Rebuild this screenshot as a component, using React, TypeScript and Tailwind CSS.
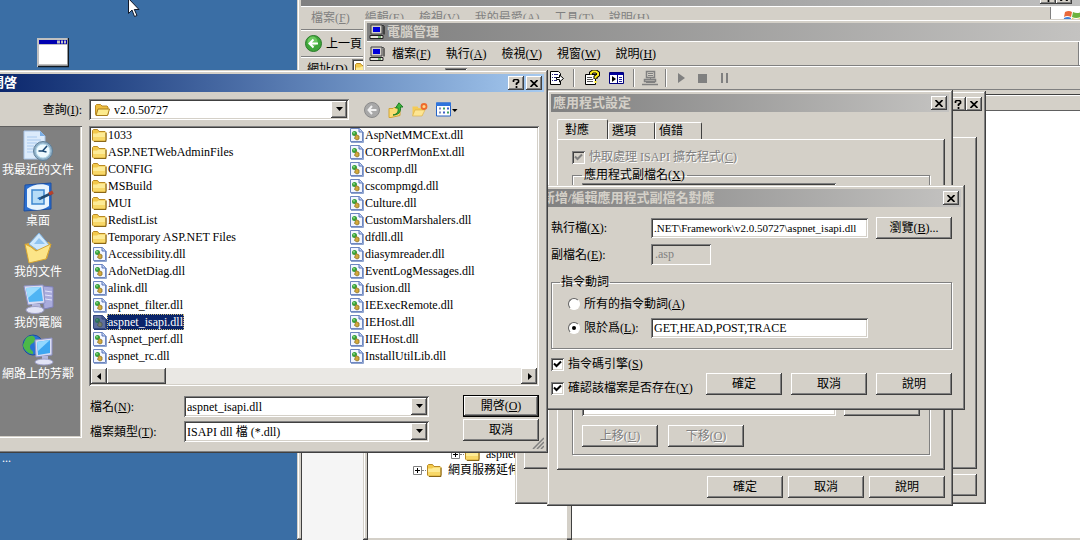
import { useState } from "react";
import type { ReactNode } from "react";

const fontMain = "font-['Liberation_Serif','Noto_Sans_CJK_TC',serif] text-[12px] leading-4 text-black";

const raisedWindow = "bg-[#d4d0c8] shadow-[inset_-1px_-1px_#404040,inset_1px_1px_#d4d0c8,inset_-2px_-2px_#808080,inset_2px_2px_#ffffff]";
const raised = "bg-[#d4d0c8] shadow-[inset_-1px_-1px_#404040,inset_1px_1px_#ffffff,inset_-2px_-2px_#808080]";
const sunken = "shadow-[inset_1px_1px_#808080,inset_-1px_-1px_#ffffff,inset_2px_2px_#404040,inset_-2px_-2px_#d4d0c8]";
const disabledText = "text-[#808080] [text-shadow:1px_1px_#ffffff]";

const places = ["我最近的文件", "桌面", "我的文件", "我的電腦", "網路上的芳鄰"];

const folders = ["1033", "ASP.NETWebAdminFiles", "CONFIG", "MSBuild", "MUI", "RedistList", "Temporary ASP.NET Files"];

const leftDlls = [
  "Accessibility.dll",
  "AdoNetDiag.dll",
  "alink.dll",
  "aspnet_filter.dll",
  "aspnet_isapi.dll",
  "Aspnet_perf.dll",
  "aspnet_rc.dll",
];

const rightDlls = [
  "AspNetMMCExt.dll",
  "CORPerfMonExt.dll",
  "cscomp.dll",
  "cscompmgd.dll",
  "Culture.dll",
  "CustomMarshalers.dll",
  "dfdll.dll",
  "diasymreader.dll",
  "EventLogMessages.dll",
  "fusion.dll",
  "IEExecRemote.dll",
  "IEHost.dll",
  "IIEHost.dll",
  "InstallUtilLib.dll",
];

/* ---------- icons ---------- */

function FolderIcon() {
  return (
    <svg width="16" height="16" viewBox="0 0 16 16" className="shrink-0">
      <path d="M1.5 13V3.5l1-1h4l1.5 2h6l1 1V13l-1 1h-11.500z" fill="#f3c94b" stroke="#b98a24" />
      <path d="M2 6.500h4l1.500-1H14.500V13H2z" fill="#fdeb96" />
      <path d="M2 10h12.500v3.500H2z" fill="#f8d868" />
      <path d="M3 14.500h12V6" stroke="#8a6718" fill="none" />
    </svg>
  );
}

function OpenFolderIcon() {
  return (
    <svg width="16" height="16" viewBox="0 0 16 16" className="shrink-0">
      <path d="M1.500 12.500V3.500l1-1h4l1.500 1.500h5l1 1v7.500z" fill="#eebd3e" stroke="#b98a24" />
      <path d="M2 13.500l2-6.500h11.500l-2 6.500z" fill="#fdeb8c" stroke="#a87c1c" />
    </svg>
  );
}

function DllIcon({ selected = false }: { selected?: boolean }) {
  return (
    <svg width="16" height="16" viewBox="0 0 16 16" className="shrink-0">
      <path d="M2.500 1.500h9l3 3v10h-12z" fill={selected ? "#5e6f9e" : "#f2f6ff"} stroke={selected ? "#33477f" : "#6d86c0"} />
      <path d="M11 1.500v3.500h3.500" fill={selected ? "#4b5f92" : "#c3d4f5"} stroke={selected ? "#33477f" : "#5673b8"} />
      <path d="M3 15.500h12.500V5" fill="none" stroke={selected ? "#22376f" : "#8fa4cf"} />
      <circle cx="6.500" cy="6.500" r="2.500" fill={selected ? "#2a7058" : "#35a03a"} />
      <path d="M8 7.500l3 1.500v3l-2 1-2.500-1.500z" fill={selected ? "#77806a" : "#d3a93a"} stroke={selected ? "#4b5652" : "#8d7226"} strokeWidth=".8" />
      <circle cx="6" cy="5.800" r=".9" fill={selected ? "#598f7c" : "#9be08e"} />
    </svg>
  );
}

function PcIcon() {
  return (
    <svg width="16" height="16" viewBox="0 0 16 16" className="shrink-0">
      <path d="M2 1h11v9H2z" fill="#d4d0c8" stroke="#404040" />
      <path d="M4 3h7v5H4z" fill="#0000d8" />
      <path d="M13.500 1l1.500 1.500v8" stroke="#000" fill="none" />
      <path d="M1 11.500h13v3H1z" fill="#e8e5de" stroke="#202020" />
      <path d="M9 13h3" stroke="#008000" />
    </svg>
  );
}

function Arrow({ dir }: { dir: "down" | "left" | "right" }) {
  const shape = { down: "M1 2h7L4.500 6z", left: "M6 1v7L2 4.500z", right: "M3 1v7l4-3.500z" };
  return (
    <svg width="9" height="9" viewBox="0 0 9 9">
      <path d={shape[dir]} fill="#000" />
    </svg>
  );
}

function PlaceIcon({ index }: { index: number }) {
  return (
    <svg width="32" height="32" viewBox="0 0 32 32">
      {index === 0 && (
        <>
          <path d="M2 1h16l5 5v23H2z" fill="#dcebfb" stroke="#a8c4e6" />
          <path d="M18 1v5h5" fill="#7aaee6" />
          <path d="M5 7h10M5 10h14M5 13h10M5 16h7M5 19h6M5 22h6" stroke="#a9c9ee" />
          <circle cx="21" cy="21" r="9.500" fill="#8fb0c8" stroke="#5f7f98" />
          <circle cx="21" cy="21" r="7" fill="#eefaff" stroke="#b9dced" />
          <path d="M25 16l-4.500 5H16.500M20.500 21l4 1" stroke="#1e4a74" strokeWidth="1.600" fill="none" />
        </>
      )}
      {index === 1 && (
        <>
          <path d="M3 4l26-2v26L2 30z" fill="#2b6fd0" stroke="#1c4fa2" />
          <path d="M5 8c6-5 16-6 22-3v20c-7 5-16 5-22 1z" fill="#e8f4fd" />
          <path d="M10 9h12v14H10z" fill="#b6dcf7" stroke="#3e86cf" strokeWidth="1.500" />
          <path d="M17 18l13-6" stroke="#214a70" strokeWidth="2.500" />
          <path d="M27 13l4-2" stroke="#b5402a" strokeWidth="3.500" />
          <path d="M15 17l4-1-1 3z" fill="#1b6ac0" />
        </>
      )}
      {index === 2 && (
        <>
          <path d="M3 12l4-1 20-1 2 3-4 14-18 3z" fill="#dda93a" />
          <path d="M7 12L17 1l11 13-6 9z" fill="#cfe8fc" stroke="#7fb2e0" />
          <path d="M12 12l5-6 6 6z" fill="#8fc4f1" />
          <path d="M3 12l6 3 5 4 15-7-5 15-17 4z" fill="#fce588" stroke="#d6a532" />
        </>
      )}
      {index === 3 && (
        <>
          <path d="M20 3l11 1v20l-9 2z" fill="#a9abdc" stroke="#7e80b8" />
          <path d="M23 8l7 1M23 12l7 1M23 16l7 1" stroke="#e3e4fb" />
          <path d="M2 3l19-1 2 18-17 2z" fill="#d9dcf3" stroke="#8c90c4" />
          <path d="M4 5l15-1 2 14-14 1z" fill="#4fb4f4" />
          <path d="M4 5l15-1-13 11z" fill="#9bdcff" />
          <path d="M10 21h8l1 4H10z" fill="#b6b9de" />
          <ellipse cx="13" cy="27" rx="9" ry="3.500" fill="#e2e4f6" stroke="#9ea1cb" />
        </>
      )}
      {index === 4 && (
        <>
          <circle cx="11" cy="11" r="10" fill="#2872d4" stroke="#1b4fa0" />
          <path d="M4 4c5-4 10-2 9 2s-5 3-5 7 4 3 3 7c-5 0-10-5-10-9z" fill="#4cb848" />
          <path d="M13 6l17-2v17l-16 2z" fill="#d9dcf3" stroke="#8c90c4" />
          <path d="M15 8l13-2v13l-12 2z" fill="#3ea6f0" />
          <path d="M15 8l13-2-12 11z" fill="#93d8ff" />
          <path d="M20 22h6v4h-6z" fill="#b6b9de" />
          <ellipse cx="22" cy="28" rx="9" ry="3" fill="#e2e4f6" stroke="#9ea1cb" />
        </>
      )}
    </svg>
  );
}

/* ---------- controls ---------- */

function Key({ text, k, tail = "" }: { text: string; k: string; tail?: string }) {
  return (
    <>
      {text}(<u>{k}</u>){tail}
    </>
  );
}

function PushButton({ children, label, disabled = false, primary = false }: {
  children?: ReactNode;
  label?: string;
  disabled?: boolean;
  primary?: boolean;
}) {
  return (
    <button
      aria-label={label}
      disabled={disabled}
      className={`h-[22px] w-[76px] shrink-0 whitespace-nowrap ${raised} ${disabled ? disabledText : ""} ${primary ? "border border-black" : ""}`}
    >
      {children}
    </button>
  );
}

function CaptionButton({ kind }: { kind: "close" | "help" }) {
  return (
    <button aria-label={kind} className={`flex h-[14px] w-4 items-center justify-center ${raised}`}>
      {kind === "close" ? (
        <svg width="8" height="7" viewBox="0 0 8 7">
          <path d="M.5 0l7 7M7.500 0l-7 7" stroke="#000" strokeWidth="1.700" />
        </svg>
      ) : (
        <svg width="8" height="9" viewBox="0 0 8 9">
          <path d="M1.500 3V1.500l1-1h3l1 1V3L4.500 4.500V6M4.500 7v2" stroke="#000" strokeWidth="1.700" fill="none" />
        </svg>
      )}
    </button>
  );
}

function TitleBar({ title, active = false, help = false, icon, buttons = true }: {
  title?: string;
  active?: boolean;
  help?: boolean;
  icon?: ReactNode;
  buttons?: boolean;
}) {
  return (
    <div
      className={`flex h-[18px] shrink-0 items-center gap-0.5 px-0.5 ${
        active ? "bg-linear-to-r from-[#0a246a] to-[#a6caf0] text-white" : "bg-linear-to-r from-[#808080] to-[#c4c3c1] text-[#d4d0c8]"
      }`}
    >
      {icon}
      <h2 className="flex-1 truncate text-[13px] font-bold">{title}</h2>
      {buttons && help && <CaptionButton kind="help" />}
      {buttons && <CaptionButton kind="close" />}
    </div>
  );
}

function TickBox({ id, label, defaultChecked, disabled = false }: { id: string; label: ReactNode; defaultChecked: boolean; disabled?: boolean }) {
  return (
    <div className="flex h-4 items-center gap-1">
      <span className="grid place-items-center">
        <input
          id={id}
          type="checkbox"
          defaultChecked={defaultChecked}
          disabled={disabled}
          className={`peer col-start-1 row-start-1 size-[13px] appearance-none ${sunken} ${disabled ? "bg-[#d4d0c8]" : "bg-white"}`}
        />
        <svg width="9" height="9" viewBox="0 0 9 9" className="pointer-events-none invisible col-start-1 row-start-1 peer-checked:visible">
          <path d="M1 3.500l2.500 2.500L8 1.500" stroke={disabled ? "#808080" : "#000"} strokeWidth="2" fill="none" />
        </svg>
      </span>
      <label htmlFor={id} className={disabled ? disabledText : ""}>{label}</label>
    </div>
  );
}

function RadioDot({ id, label, checked, onChange }: { id: string; label: ReactNode; checked: boolean; onChange: () => void }) {
  return (
    <div className="flex h-5 items-center gap-1">
      <span className="grid place-items-center">
        <input
          id={id}
          type="radio"
          name="verbs"
          checked={checked}
          onChange={onChange}
          className="peer col-start-1 row-start-1 size-3 appearance-none rounded-full border border-t-[#606060] border-r-white border-b-white border-l-[#606060] bg-white"
        />
        <span className="pointer-events-none invisible col-start-1 row-start-1 size-1 rounded-full bg-black peer-checked:visible" />
      </span>
      <label htmlFor={id}>{label}</label>
    </div>
  );
}

function DropButton({ label }: { label: string }) {
  return (
    <button aria-label={label} tabIndex={-1} className={`flex w-4 shrink-0 items-center justify-center self-stretch ${raised}`}>
      <Arrow dir="down" />
    </button>
  );
}

/* ---------- windows ---------- */

function ExplorerWindow() {
  const menu = [["檔案", "F"], ["編輯", "E"], ["檢視", "V"], ["我的最愛", "A"], ["工具", "T"], ["說明", "H"]];
  return (
    <section className={`absolute -top-4 -right-1 bottom-0 left-[297px] flex flex-col pt-1 pl-1 ${raisedWindow}`}>
      <div className="flex h-[18px] shrink-0 items-center justify-end bg-linear-to-r from-[#808080] to-[#c0c0c0] pr-3">
        <CaptionButton kind="help" />
        <CaptionButton kind="close" />
      </div>
      <div className="flex h-6 shrink-0 items-stretch border-t border-b border-t-white border-b-[#808080]">
        <nav className="flex flex-1 items-center gap-[15px] pl-2.5 text-[#808080]">
          {menu.map(([text, k]) => (
            <button key={text} className="whitespace-nowrap"><Key text={text} k={k} /></button>
          ))}
        </nav>
        <div className="flex w-[34px] items-center border-l border-[#808080] bg-white pl-3">
          <svg width="18" height="16" viewBox="0 0 18 16" className="shrink-0">
            <path d="M2 2q4-2 7 0L8 7Q4 5 1 7z" fill="#e8693a" />
            <path d="M10 2q4 2 8 0v5q-5 2-9 0z" fill="#6db33f" />
            <path d="M1 8q4-2 7 0l-1 5q-3-2-7 0z" fill="#3f7fd6" />
            <path d="M9 8q4 2 9 0v5q-6 2-10 0z" fill="#f0c33c" />
          </svg>
        </div>
      </div>
      <div className="flex h-[27px] shrink-0 items-center gap-1 border-t border-b border-t-white border-b-[#808080] pl-1">
        <svg width="17" height="17" viewBox="0 0 17 17">
          <circle cx="8.500" cy="8.500" r="8" fill="#3fa53a" stroke="#2b7a2b" />
          <circle cx="7.500" cy="6.500" r="5" fill="#6cc95f" />
          <path d="M13 8.500H5M8.500 4.500l-4 4 4 4" stroke="#fff" strokeWidth="2" fill="none" />
        </svg>
        <button>上一頁</button>
      </div>
      <div className="flex h-[22px] shrink-0 items-center gap-1 border-t border-white pl-1.5">
        <span className="whitespace-nowrap"><Key text="網址" k="D" /></span>
        <div className={`flex h-5 flex-1 items-center bg-white pl-0.5 ${sunken}`}><FolderIcon /></div>
      </div>
      <div className="flex-1 border-t border-l border-[#404040] bg-[#f5f5f5]" />
    </section>
  );
}

function Separator() {
  return <span className="h-[18px] w-0.5 border-l border-l-[#808080] bg-white" />;
}

function Expander() {
  return (
    <svg width="9" height="9" viewBox="0 0 9 9">
      <path d="M.5.5h8v8h-8z" fill="#fff" stroke="#808080" />
      <path d="M2 4.500h5M4.500 2v5" stroke="#000" />
    </svg>
  );
}

function ManagementWindow() {
  const menu = [["檔案", "F"], ["執行", "A"], ["檢視", "V"], ["視窗", "W"], ["說明", "H"]];
  return (
    <section className={`absolute top-[19px] -right-1 bottom-0 left-[363px] flex flex-col pt-1 pl-1 ${raisedWindow}`}>
      <TitleBar title="電腦管理" icon={<PcIcon />} buttons={false} />
      <div className="flex h-[25px] shrink-0 items-center border-t border-b border-t-white border-b-[#808080] pr-1 pl-0.5">
        <PcIcon />
        <nav className="flex flex-1 items-center gap-[15px] pl-[7px]">
          {menu.map(([text, k]) => (
            <button key={text}><Key text={text} k={k} /></button>
          ))}
        </nav>
        <span className="w-0.5 self-stretch border-l border-l-[#808080] bg-white" />
      </div>
      <div className="flex h-6 shrink-0 items-center gap-[9px] border-t border-b border-t-white border-b-[#808080] pl-[78px]">
        <button aria-label="console tree" className={`mr-[72px] h-5 w-[22px] ${sunken}`} />
        <button aria-label="export list">
          <svg width="16" height="16" viewBox="0 0 16 16">
            <path d="M2.500 1.500h8l2 2v11h-10z" fill="#fff" stroke="#000" />
            <path d="M4 4.500h1M4 7.500h1M4 10.500h1M6 4.500h4M6 7.500h3M6 10.500h3" stroke="#24247c" />
            <path d="M8.500 7.500h3V5l4 3.500-4 3.500V9.500h-3z" fill="#fff" stroke="#000" />
          </svg>
        </button>
        <Separator />
        <button aria-label="help">
          <svg width="16" height="16" viewBox="0 0 16 16">
            <path d="M1.500 4.500h10v10h-10z" fill="#fff" stroke="#000" />
            <path d="M3 7.500h5M3 9.500h6M3 11.500h6" stroke="#555" />
            <path d="M7 4.500V3l2-1.500h3L14 3v2l-2.500 2v2" fill="none" stroke="#000" strokeWidth="4" />
            <path d="M7 4.500V3l2-1.500h3L14 3v2l-2.500 2v1.500M11.500 11v2" fill="none" stroke="#ffee20" strokeWidth="2" />
          </svg>
        </button>
        <button aria-label="action pane">
          <svg width="15" height="14" viewBox="0 0 15 14">
            <path d="M.5 1.500h14v11H.5z" fill="#fff" stroke="#00007b" />
            <path d="M1 2h13v2H1z" fill="#00009c" />
            <path d="M8.500 4v8" stroke="#00007b" />
            <path d="M3 5v6l4-3z" fill="#000" />
            <path d="M10 6.500h3M10 8.500h3M10 10.500h3" stroke="#2424a0" />
          </svg>
        </button>
        <Separator />
        <svg width="16" height="16" viewBox="0 0 16 16" className="-mx-0.5">
          <path d="M4.500 1.500h8v6h-8zM2.500 9.500h11v2h-11zM0 14.500h16" fill="none" stroke="#808080" strokeWidth="1.500" />
          <path d="M6 3.500h5M6 5.500h5M8.500 8v1M4 12.500h9" stroke="#808080" />
        </svg>
        <Separator />
        <svg width="60" height="12" viewBox="0 0 60 12">
          <path d="M2 1v10l7-5z" fill="#808080" />
          <path d="M22 2h9v9h-9z" fill="#808080" />
          <path d="M46 1v10M51 1v10" stroke="#808080" strokeWidth="2" />
        </svg>
      </div>
      <div className="mt-1 flex flex-1 gap-1">
        <div className="flex w-[200px] shrink-0 flex-col overflow-hidden border-t border-l border-[#404040] bg-white pt-[351px]">
          <ul className="flex-1 overflow-hidden whitespace-nowrap">
            <li className="flex h-4 items-center pl-[83px]">
              <Expander />
              <span className="w-1 border-t border-dotted border-[#808080]" />
              <FolderIcon />
              <span className="pl-1.5">aspnet_client</span>
            </li>
            <li className="flex h-4 items-center pl-[45px]">
              <Expander />
              <span className="w-1 border-t border-dotted border-[#808080]" />
              <FolderIcon />
              <span className="pl-1.5">網頁服務延伸</span>
            </li>
          </ul>
          <div className="h-0.5 bg-[#d4d0c8]" />
        </div>
        <div className="flex flex-1 flex-col border-t border-l border-[#404040] bg-white">
          <div className="h-4 border-t border-b border-t-white border-b-[#606060] bg-[#d4d0c8]" />
          <div className="flex-1" />
          <div className="h-0.5 bg-[#d4d0c8]" />
        </div>
      </div>
    </section>
  );
}

function SiteWindow() {
  return (
    <section className={`absolute top-[91px] left-[515px] flex w-[471px] flex-col p-1 ${raisedWindow}`}>
      <div className="flex h-[18px] items-center justify-end">
        <CaptionButton kind="help" />
        <CaptionButton kind="close" />
      </div>
      <div className="px-[5px]">
        <div className="mt-6 h-[332px] shadow-[inset_-1px_-1px_#404040,inset_1px_1px_#ffffff,inset_-2px_-2px_#808080]" />
      </div>
      <div className="flex justify-end px-[5px] pt-[5px] pb-1">
        <PushButton label="help" />
      </div>
    </section>
  );
}

function Tab({ children, active = false }: { children: ReactNode; active?: boolean }) {
  return (
    <button
      role="tab"
      aria-selected={active}
      className={`rounded-t-xs border-t border-r border-l border-t-white border-r-[#404040] border-l-white text-left ${
        active ? "h-5 w-[51px] bg-[#d4d0c8] px-[7px]" : "h-[17px] w-[47px] border-l-[#d4d0c8] pl-[3px]"
      }`}
    >
      {children}
    </button>
  );
}

function SettingsWindow() {
  return (
    <section className={`absolute top-[90px] left-[547px] flex w-[406px] flex-col p-1 ${raisedWindow}`}>
      <TitleBar title="應用程式設定" />
      <div className="pt-[7px] pr-1 pl-1.5">
        <div role="tablist" className="flex items-end">
          <Tab active>對應</Tab>
          <Tab>選項</Tab>
          <Tab>偵錯</Tab>
        </div>
        <div className="h-[331px] px-[15px] pt-2.5 shadow-[inset_-1px_-1px_#404040,inset_1px_1px_#ffffff,inset_-2px_-2px_#808080]">
          <TickBox id="cache" label={<Key text="快取處理 ISAPI 擴充程式" k="C" />} defaultChecked disabled />
          <fieldset className="mt-0.5 border border-[#808080] px-[9px] pb-[7px] shadow-[1px_1px_#ffffff,inset_1px_1px_#ffffff]">
            <legend className="px-0.5"><Key text="應用程式副檔名" k="X" /></legend>
            <div className="flex items-end gap-2">
              <div className={`h-[233px] w-[254px] bg-white ${sunken}`} />
              <PushButton label="edit" />
            </div>
            <div className="flex gap-2.5 pt-[9px]">
              <PushButton disabled><Key text="上移" k="U" /></PushButton>
              <PushButton disabled><Key text="下移" k="O" /></PushButton>
            </div>
          </fieldset>
        </div>
        <div className="flex justify-end gap-[5px] pt-1.5 pb-1">
          <PushButton>確定</PushButton>
          <PushButton>取消</PushButton>
          <PushButton>說明</PushButton>
        </div>
      </div>
    </section>
  );
}

function MappingWindow() {
  const [limited, setLimited] = useState<boolean>(true);

  return (
    <section className={`absolute top-[185px] left-[536px] flex w-[429px] flex-col p-1 ${raisedWindow}`}>
      <TitleBar title="新增/編輯應用程式副檔名對應" />
      <div className="flex flex-col pt-2.5 pr-[9px] pb-2.5 pl-[11px]">
        <div className="flex items-center">
          <label htmlFor="exe" className="w-[100px]"><Key text="執行檔" k="X" tail=":" /></label>
          <input
            id="exe"
            defaultValue=".NET\Framework\v2.0.50727\aspnet_isapi.dll"
            className={`mr-2 h-5 min-w-0 flex-1 bg-white px-[3px] text-[11px] outline-none ${sunken}`}
          />
          <PushButton><Key text="瀏覽" k="B" tail="..." /></PushButton>
        </div>
        <div className="mt-[5px] flex items-center">
          <label htmlFor="ext" className="w-[100px]"><Key text="副檔名" k="E" tail=":" /></label>
          <input id="ext" disabled defaultValue=".asp" className={`h-[21px] w-[60px] bg-[#d4d0c8] px-1 text-[#808080] ${sunken}`} />
        </div>
        <fieldset className="mt-[9px] border border-[#808080] px-4 pb-2.5 shadow-[1px_1px_#ffffff,inset_1px_1px_#ffffff]">
          <legend className="-ml-2 px-px">指令動詞</legend>
          <div className="flex flex-col gap-1 pt-1">
            <RadioDot id="all-verbs" label={<Key text="所有的指令動詞" k="A" />} checked={!limited} onChange={() => setLimited(false)} />
            <div className="flex items-center">
              <div className="w-[83px]">
                <RadioDot id="limit-verbs" label={<Key text="限於爲" k="L" tail=":" />} checked={limited} onChange={() => setLimited(true)} />
              </div>
              <input aria-label="限於爲" defaultValue="GET,HEAD,POST,TRACE" className={`h-5 w-[217px] bg-white px-[3px] outline-none ${sunken}`} />
            </div>
          </div>
        </fieldset>
        <div className="flex items-end justify-between pt-[7px]">
          <div className="flex flex-col gap-2">
            <TickBox id="script-engine" label={<Key text="指令碼引擎" k="S" />} defaultChecked />
            <TickBox id="verify" label={<Key text="確認該檔案是否存在" k="Y" />} defaultChecked />
          </div>
          <div className="flex gap-[9px] pb-px">
            <PushButton>確定</PushButton>
            <PushButton>取消</PushButton>
            <PushButton>說明</PushButton>
          </div>
        </div>
      </div>
    </section>
  );
}

function FileRow({ name, folder = false, selected, onSelect }: { name: string; folder?: boolean; selected: boolean; onSelect: () => void }) {
  return (
    <button onClick={onSelect} className="flex h-[17px] items-center text-left whitespace-nowrap">
      {folder ? <FolderIcon /> : <DllIcon selected={selected} />}
      <span className={`px-px ${selected ? "bg-[#0a246a] text-white outline-1 -outline-offset-1 outline-dotted outline-[#c8b878]" : ""}`}>{name}</span>
    </button>
  );
}

function OpenDialog() {
  const [file, setFile] = useState<string>("aspnet_isapi.dll");

  return (
    <section className={`absolute top-[70px] left-[-15px] flex w-[563px] flex-col p-1 ${raisedWindow}`}>
      <TitleBar title="開啓" active help />
      <div className="flex items-center pt-[7px]">
        <label htmlFor="look-in" className="w-[93px] text-right"><Key text="查詢" k="I" tail=":" /></label>
        <div className={`ml-[7px] flex h-[21px] w-[260px] items-center bg-white p-0.5 pl-[5px] ${sunken}`}>
          <OpenFolderIcon />
          <select id="look-in" className="h-4 min-w-0 flex-1 appearance-none pl-1 outline-none">
            <option>v2.0.50727</option>
          </select>
          <DropButton label="open folder list" />
        </div>
        <div className="ml-[15px] flex items-center gap-2">
          <button aria-label="back">
            <svg width="16" height="16" viewBox="0 0 16 16">
              <circle cx="8" cy="8" r="7.500" fill="#a8a8a8" stroke="#8a8a8a" />
              <path d="M12.500 8H5M8 4L4.500 8 8 12" stroke="#f0f0f0" strokeWidth="2" fill="none" />
            </svg>
          </button>
          <button aria-label="up one level">
            <svg width="16" height="16" viewBox="0 0 16 16">
              <path d="M1 6.500h4l1-1h6v8l-9 2H1z" fill="#fbdc72" stroke="#d2a436" />
              <path d="M5 13c5-1 5.500-4 5-7H7.500L11 .8 15 5h-2.500c.5 5-2 8-7.500 8z" fill="#3bb53b" stroke="#1f7d25" />
            </svg>
          </button>
          <button aria-label="new folder">
            <svg width="16" height="16" viewBox="0 0 16 16">
              <path d="M.5 13V4.500h5l1 1.500h5l-1 7.500z" fill="#f4cb57" />
              <path d="M.5 14L3 8h10l-3 6z" fill="#fde592" stroke="#d9ab40" strokeWidth=".6" />
              <circle cx="12" cy="4.500" r="2.500" fill="#ffd98a" stroke="#ee6a2c" strokeWidth="1.800" />
            </svg>
          </button>
          <button aria-label="view menu" className="flex items-center">
            <svg width="22" height="15" viewBox="0 0 22 15">
              <path d="M.5 1h14v13H.5z" fill="#fff" stroke="#2463c8" />
              <path d="M0 .5h15v3.500H0z" fill="#2f74dc" />
              <path d="M3 6.500h2M3 10.500h2" stroke="#7a8cc0" strokeWidth="2" />
              <path d="M7 6.500h2M11 10.500h2" stroke="#40a060" strokeWidth="2" />
              <path d="M11 6.500h2M7 10.500h2" stroke="#4060c8" strokeWidth="2" />
              <path d="M16 7h5.500l-2.700 3z" fill="#000" />
            </svg>
          </button>
        </div>
      </div>

      <div className="flex gap-[7px] pt-1.5 pr-[5px]">
        <nav className="flex h-[312px] w-[93px] shrink-0 flex-col gap-[3px] bg-[#808080] pt-1 pl-[5px] shadow-[inset_0_1px_#606060,inset_-1px_-1px_#ffffff,inset_-2px_-2px_#d4d0c8]">
          {places.map((place, i) => (
            <button key={place} className="flex flex-col items-center whitespace-nowrap text-white">
              <PlaceIcon index={i} />
              {place}
            </button>
          ))}
        </nav>

        <div className="flex flex-1 flex-col">
          <div className={`flex h-[260px] flex-col justify-between bg-white px-0.5 pb-0.5 ${sunken}`}>
            <div className="flex">
              <div className="flex w-[257px] flex-col">
                {folders.map((name) => (
                  <FileRow key={name} name={name} folder selected={file === name} onSelect={() => setFile(name)} />
                ))}
                {leftDlls.map((name) => (
                  <FileRow key={name} name={name} selected={file === name} onSelect={() => setFile(name)} />
                ))}
              </div>
              <div className="flex flex-col">
                {rightDlls.map((name) => (
                  <FileRow key={name} name={name} selected={file === name} onSelect={() => setFile(name)} />
                ))}
              </div>
            </div>
            <div className="flex h-4 bg-[#eae8e4]">
              <button aria-label="scroll left" className={`flex w-4 items-center justify-center ${raised}`}><Arrow dir="left" /></button>
              <div className={`w-[59px] ${raised}`} />
              <button aria-label="scroll right" className={`ml-auto flex w-4 items-center justify-center ${raised}`}><Arrow dir="right" /></button>
            </div>
          </div>

          <div className="flex items-start justify-between pt-[9px]">
            <div className="grid grid-cols-[95px_245px] items-center gap-y-1 pt-px">
              <label htmlFor="file-name" className="pl-px"><Key text="檔名" k="N" tail=":" /></label>
              <div className={`flex h-[21px] bg-white p-0.5 ${sunken}`}>
                <input id="file-name" value={file} onChange={(e) => setFile(e.target.value)} className="min-w-0 flex-1 pl-px outline-none" />
                <DropButton label="recent files" />
              </div>
              <label htmlFor="file-type" className="pl-px"><Key text="檔案類型" k="T" tail=":" /></label>
              <div className={`flex h-[21px] bg-white p-0.5 ${sunken}`}>
                <select id="file-type" className="min-w-0 flex-1 appearance-none pl-px outline-none">
                  <option>ISAPI dll 檔 (*.dll)</option>
                </select>
                <DropButton label="open type list" />
              </div>
            </div>
            <div className="flex flex-col gap-0.5">
              <PushButton primary><Key text="開啓" k="O" /></PushButton>
              <PushButton>取消</PushButton>
            </div>
          </div>
        </div>
      </div>

      <div className="flex h-[7px] items-end justify-end">
        <svg width="12" height="12" viewBox="0 0 12 12" className="shrink-0">
          <path d="M1 12L12 1M5 12l7-7M9 12l3-3" stroke="#808080" strokeWidth="1.500" />
        </svg>
      </div>
    </section>
  );
}

function App() {
  return (
    <main className={`relative h-screen min-h-[540px] overflow-hidden bg-[#3a6ea5] ${fontMain}`}>
      <svg width="32" height="30" viewBox="0 0 32 30" className="absolute top-[38px] left-[37px]">
        <path d="M0 0h31v29H0z" fill="#c0c0c0" />
        <path d="M1 28.500h30.500V0" stroke="#101820" strokeWidth="1.500" fill="none" />
        <path d="M2 2h28v4H2z" fill="#0000b0" />
        <path d="M20 2.500h3v3h-3zM24 2.500h2v3h-2zM27 2.500h2v3h-2z" fill="#c0c0c0" />
        <path d="M2 7h28v19H2z" fill="#fff" />
      </svg>
      <span className="absolute top-[450px] left-0.5 text-white">...</span>

      <ExplorerWindow />
      <ManagementWindow />
      <SiteWindow />
      <SettingsWindow />
      <MappingWindow />
      <OpenDialog />

      <svg width="13" height="20" viewBox="0 0 13 20" className="absolute top-[-2px] left-[128px]">
        <path d="M.5.5v15l3.500-3.500 2.500 6.500 2.500-1-2.700-6h4.700z" fill="#fff" stroke="#101828" />
      </svg>
    </main>
  );
}

export default App;
